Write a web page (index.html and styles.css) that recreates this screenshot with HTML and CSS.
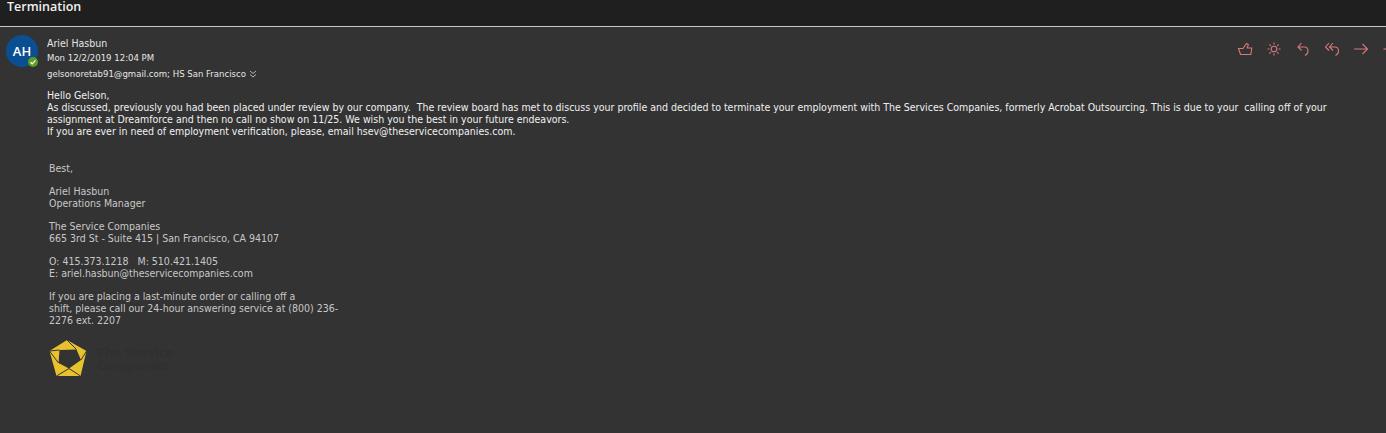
FILE: index.html
```html
<!DOCTYPE html>
<html lang="en">
<head>
    <meta charset="UTF-8">
    <title>Termination</title>
    <link rel="stylesheet" href="styles.css">
</head>
<body>
    <div class="subject-bar">
        <h1>Termination</h1>
    </div>
    <div class="message">
        <div class="message-head">
            <div class="avatar">AH
                <span class="presence">
                    <svg width="8" height="8" viewBox="0 0 8 8"><path d="M1.500 4.200 3.200 5.800 6.500 2.400" fill="none" stroke="#fff" stroke-width="1.200"/></svg>
                </span>
            </div>
            <div class="sender">
                <div class="sender-name">Ariel Hasbun</div>
                <div class="sent-date">Mon 12/2/2019 12:04 PM</div>
                <div class="recipients">gelsonoretab91@gmail.com; <b>HS San Francisco</b>
                    <svg class="expand" width="8" height="8" viewBox="0 0 8 8"><path d="M1 1 4 3.500 7 1M1 4.500 4 7 7 4.500" fill="none" stroke="#b5b5b5" stroke-width="1"/></svg>
                </div>
            </div>
            <div class="actions">
                <svg width="16" height="16" viewBox="0 0 16 16"><path d="M1.500 7.500H6L9.500 2.500 11.300 3.500 10.300 7H14.800L13.800 13.500H3.500Z"/></svg>
                <svg width="16" height="16" viewBox="0 0 16 16"><circle cx="8" cy="8" r="2.800"/><path d="M8 1.500V3.500M8 12.500V14.500M1.500 8H3.500M12.500 8H14.500M3.400 3.400 4.800 4.800M11.200 11.200 12.600 12.600M3.400 12.600 4.800 11.200M11.200 4.800 12.600 3.400"/></svg>
                <svg width="16" height="16" viewBox="0 0 16 16"><path d="M6.500 2 3 6 6.500 9.500M3 6H9.500C12 6 13 8 13 10S12 13.500 10 14.500"/></svg>
                <svg width="16" height="16" viewBox="0 0 16 16"><path d="M5 2 1.500 6 5 9.500M9 2 5.500 6 9 9.500M5.500 6H11C13.500 6 14.500 8 14.500 10S13.500 13.500 11.500 14.500"/></svg>
                <svg width="16" height="16" viewBox="0 0 16 16"><path d="M1 8H14.500M9.500 3 14.500 8 9.500 13"/></svg>
                <svg width="16" height="16" viewBox="0 0 16 16"><path d="M1.500 8H14"/></svg>
            </div>
        </div>
        <div class="message-body">
            <p>Hello Gelson,<br>
            As discussed, previously you had been placed under review by our company.&nbsp; The review board has met to discuss your profile and decided to terminate your employment with The Services Companies, formerly Acrobat Outsourcing. This is due to your&nbsp; calling off of your assignment at Dreamforce and then no call no show on 11/25. We wish you the best in your future endeavors.<br>
            If you are ever in need of employment verification, please, email hsev@theservicecompanies.com.</p>
        </div>
        <div class="signature">
            <p>Best,</p>
            <p>Ariel Hasbun<br>Operations Manager</p>
            <p>The Service Companies<br>665 3rd St - Suite 415 | San Francisco, CA 94107</p>
            <p>O: 415.373.1218 &nbsp; M: 510.421.1405<br>E: ariel.hasbun@theservicecompanies.com</p>
            <p>If you are placing a last-minute order or calling off a<br>shift, please call our 24-hour answering service at (800) 236-<br>2276 ext. 2207</p>
            <div class="logo-row">
                <svg width="38" height="37" viewBox="0 0 38 37">
                    <!-- folded pentagon ring -->
                    <path fill-rule="evenodd" fill="#e8c22e" d="M18 0 37.500 11 31.500 36H7.500L.5 11ZM10.500 10 27.500 9.500 32 20 20 28.500 9.500 23Z"/>
                    <path fill="none" stroke="#333" stroke-width="1" d="M.5 11 10.500 10M18 0 27.500 9.500M37.500 11 32 20M7.500 36 20 28.500 31.500 36M.5 11 9.500 23"/>
                </svg>
                <div class="logo-name">The Service<br>Companies</div>
            </div>
        </div>
    </div>
</body>
</html>
```
FILE: styles.css
```css
* {
    box-sizing: border-box;
    margin: 0;
    padding: 0;
}
html, body {
    height: 100%;
    overflow: hidden;
}
body {
    font-family: "DejaVu Sans", sans-serif;
    font-stretch: condensed;
    font-size: 10.5px;
    background-color: #333;
    color: #e6e6e6;
}
.subject-bar {
    height: 27px;
    padding: 0 7px;
    background-color: #1f1f1f;
    border-bottom: 1px solid #c8c8c8;
}
.subject-bar h1 {
    font-family: "Open Sans", sans-serif;
    font-stretch: normal;
    font-size: 12.5px;
    font-weight: 600;
    line-height: 14px;
    color: #f0f0f0;
}
.message-head {
    display: flex;
    padding: 8px 0 0 6px;
    height: 62px;
}
.avatar {
    position: relative;
    width: 32px;
    height: 32px;
    border-radius: 50%;
    background-color: #0b4f93;
    color: #fff;
    font-family: "Open Sans", sans-serif;
    font-stretch: normal;
    font-size: 13px;
    font-weight: 600;
    line-height: 32px;
    text-align: center;
}
.presence {
    position: absolute;
    right: 0;
    bottom: 0;
    width: 10px;
    height: 10px;
    border-radius: 50%;
    background-color: #5c9e1f;
    display: flex;
    align-items: center;
    justify-content: center;
}
.sender {
    margin-left: 9px;
    flex: 1;
    padding-top: 1px;
}
.sender-name {
    font-size: 10.5px;
    line-height: 14px;
}
.sent-date, .recipients {
    font-size: 9.5px;
    line-height: 16px;
}
.recipients b {
    font-weight: normal;
}
.recipients .expand {
    vertical-align: -1px;
}
.actions {
    display: flex;
    gap: 13px;
    margin-top: 6px;
    margin-right: -12px;
}
.actions svg {
    fill: none;
    stroke: #d9777a;
    stroke-width: 1.1;
}
.message-body {
    padding: 0 40px 0 47px;
    line-height: 12px;
    color: #f0f0f0;
}
.signature {
    padding: 25px 0 0 49px;
    line-height: 12px;
    color: #c8c8c8;
}
.signature p {
    margin-bottom: 11px;
}
.logo-row {
    display: flex;
    align-items: center;
    gap: 10px;
    margin-top: 14px;
}
.logo-name {
    font-size: 13px;
    font-weight: bold;
    line-height: 13px;
    color: #303030;
}
```
